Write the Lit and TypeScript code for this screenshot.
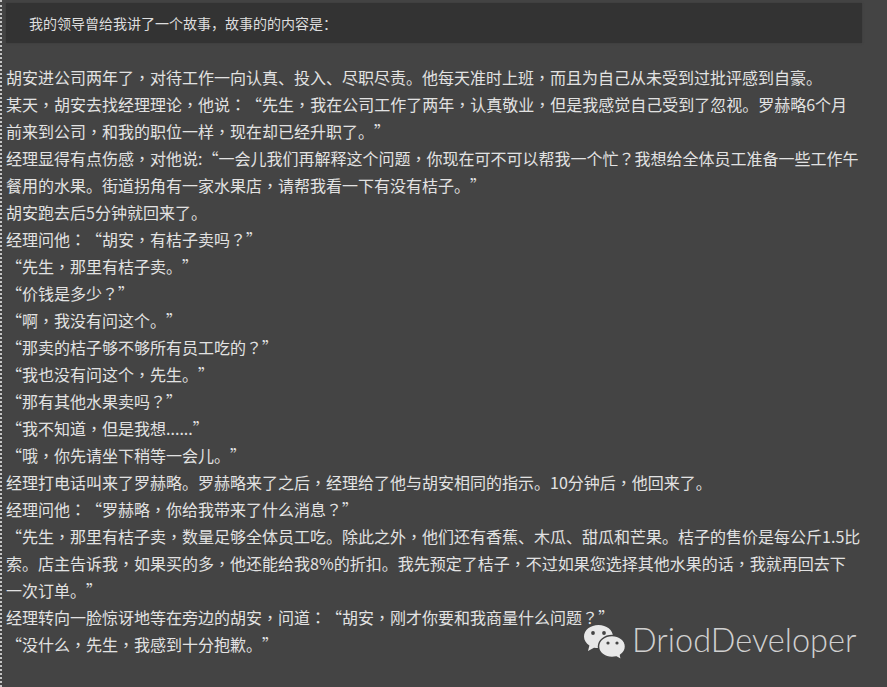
import { LitElement, html, css } from "lit";
import { customElement } from "lit/decorators.js";

const LINES = [
  "胡安进公司两年了，对待工作一向认真、投入、尽职尽责。他每天准时上班，而且为自己从未受到过批评感到自豪。",
  "某天，胡安去找经理理论，他说：“先生，我在公司工作了两年，认真敬业，但是我感觉自己受到了忽视。罗赫略6个月前来到公司，和我的职位一样，现在却已经升职了。”",
  "经理显得有点伤感，对他说:“一会儿我们再解释这个问题，你现在可不可以帮我一个忙？我想给全体员工准备一些工作午餐用的水果。街道拐角有一家水果店，请帮我看一下有没有桔子。”",
  "胡安跑去后5分钟就回来了。",
  "经理问他：“胡安，有桔子卖吗？”",
  "“先生，那里有桔子卖。”",
  "“价钱是多少？”",
  "“啊，我没有问这个。”",
  "“那卖的桔子够不够所有员工吃的？”",
  "“我也没有问这个，先生。”",
  "“那有其他水果卖吗？”",
  "“我不知道，但是我想......”",
  "“哦，你先请坐下稍等一会儿。”",
  "经理打电话叫来了罗赫略。罗赫略来了之后，经理给了他与胡安相同的指示。10分钟后，他回来了。",
  "经理问他：“罗赫略，你给我带来了什么消息？”",
  "“先生，那里有桔子卖，数量足够全体员工吃。除此之外，他们还有香蕉、木瓜、甜瓜和芒果。桔子的售价是每公斤1.5比索。店主告诉我，如果买的多，他还能给我8%的折扣。我先预定了桔子，不过如果您选择其他水果的话，我就再回去下一次订单。”",
  "经理转向一脸惊讶地等在旁边的胡安，问道：“胡安，刚才你要和我商量什么问题？”",
  "“没什么，先生，我感到十分抱歉。”",
];

const withPunct = (line: string) =>
  line
    .split(/([，：？])/)
    .map((part) =>
      /^[，：？]$/.test(part) ? html`<span class="p">${part}</span>` : part
    );

@customElement("app-root")
export class AppRoot extends LitElement {
  static styles = css`
    :host {
      display: block;
      height: 687px;
      overflow: hidden;
      position: relative;
      box-sizing: border-box;
      background: #444444;
      border-left: 2px dotted #c4c4c4;
      padding: 3px 25px 0 4px;
      font-family: "Noto Sans CJK SC", "Liberation Sans", sans-serif;
      color: #e2e2e2;
      text-spacing-trim: space-all;
    }
    .quote {
      box-sizing: border-box;
      height: 40px;
      margin: 0;
      padding: 0 0 0 23px;
      display: flex;
      align-items: center;
      background: #333333;
      box-shadow: 0 0 2px #3a3a3a;
      font-size: 14px;
      color: #dedede;
    }
    .story {
      margin: 21px 0.5px 0 0;
      font-size: 16px;
      line-height: 27px;
    }
    .story p {
      margin: 0;
    }
    .p {
      font-family: "Noto Sans CJK TC", sans-serif;
    }
    .mark {
      position: absolute;
      left: 581px;
      top: 620px;
      display: flex;
      align-items: center;
      gap: 5px;
      color: #d0d0d0;
      font-family: "Lato", sans-serif;
      font-weight: 300;
      font-size: 32.5px;
      line-height: 40px;
    }
    .mark svg {
      display: block;
      width: 44px;
      height: 40px;
    }
  `;

  render() {
    return html`
      <blockquote class="quote">我的领导曾给我讲了一个故事，故事的的内容是：</blockquote>
      <div class="story">${LINES.map((l) => html`<p>${withPunct(l)}</p>`)}</div>
      <div class="mark">
        <svg viewBox="0 -3 44 40" aria-hidden="true">
          <path fill="#e8e8e8" d="M15.500 2C7.500 2 1 7.100 1 13.500c0 3.700 2.100 6.900 5.400 9L5 28l6-3.300c1.400.3 2.900.3 4.500.3 8 0 14.500-5.100 14.500-11.500S23.500 2 15.500 2z"/>
          <path fill="#e8e8e8" stroke="#444444" stroke-width="1.500" stroke-linejoin="round" d="M29 12.500c-7.400 0-13.500 4.900-13.500 11s6.100 11 13.500 11c1.500 0 2.900-.2 4.200-.5L38.500 37l-1-5c3-2 5-5 5-8.500 0-6.100-6.100-11-13.500-11z"/>
          <circle cx="10" cy="10" r="1.900" fill="#444444"/>
          <circle cx="21" cy="10" r="1.900" fill="#444444"/>
          <circle cx="25" cy="20" r="1.600" fill="#444444"/>
          <circle cx="34" cy="20" r="1.600" fill="#444444"/>
        </svg>
        <span>DriodDeveloper</span>
      </div>
    `;
  }
}
